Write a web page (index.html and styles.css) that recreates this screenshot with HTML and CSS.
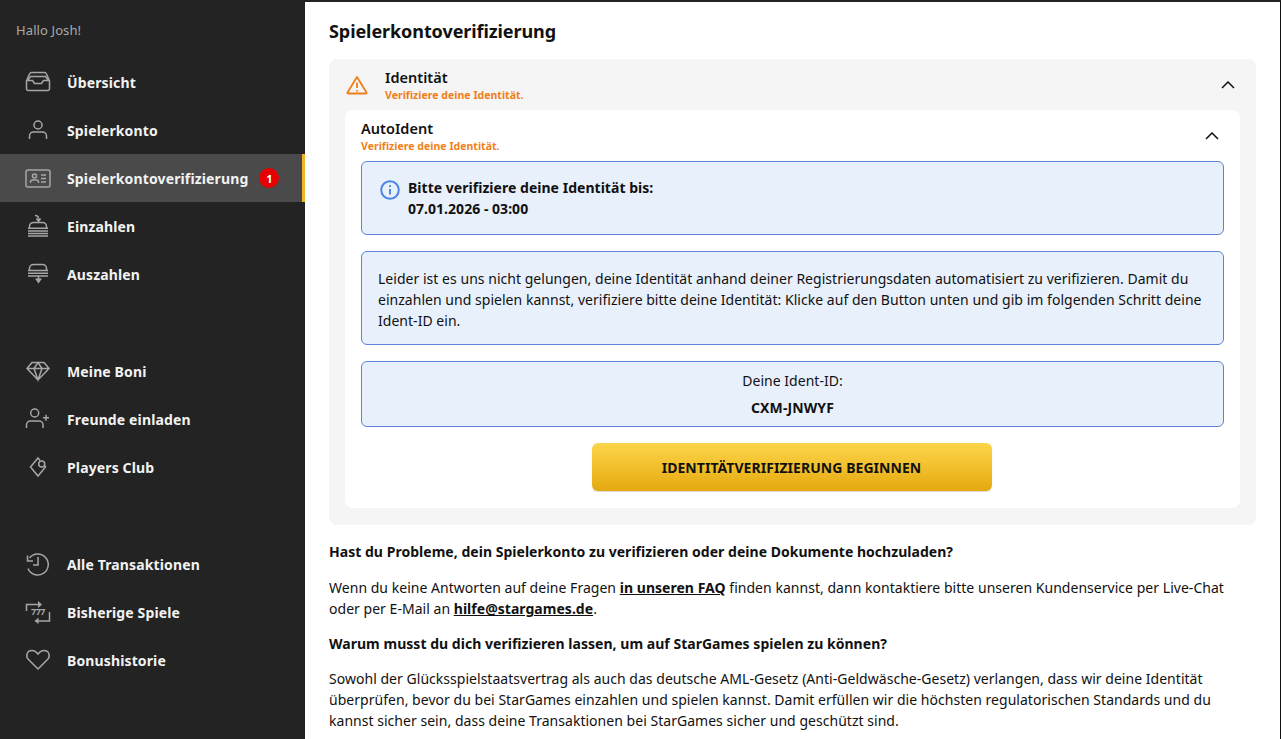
FILE: index.html
```html
<!DOCTYPE html>
<html lang="de">
<head>
  <meta charset="UTF-8" />
  <title>Spielerkontoverifizierung</title>
  <link rel="stylesheet" href="styles.css">
</head>
<body>
  <aside class="sidebar">
    <p class="hello">Hallo Josh!</p>

    <nav class="nav-group">
      <a class="nav-item">
        <svg class="nav-icon" viewBox="0 0 26 24"><path d="M6.500 2.500h13c1 0 1.500.5 2 1.500l3 7v7.500a2 2 0 0 1-2 2h-19a2 2 0 0 1-2-2V11l3-7c.5-1 1-1.500 2-1.500z"/><path d="M5.500 6.500h15l3 4h-5l-2 3h-7l-2-3h-5z"/></svg>
        Übersicht
      </a>
      <a class="nav-item">
        <svg class="nav-icon" viewBox="0 0 26 24"><circle cx="13" cy="7" r="4"/><path d="M4.500 21v-3c0-2.500 2-4 4-4h9c2 0 4 1.500 4 4v3"/></svg>
        Spielerkonto
      </a>
      <a class="nav-item active">
        <svg class="nav-icon" viewBox="0 0 26 24"><rect x="1" y="4" width="24" height="17" rx="2"/><circle cx="9.500" cy="10" r="2"/><path d="M5.500 17v-1c0-1.500 1-2 2-2h4c1 0 2 .5 2 2v1M16 9h5M16 12.500h5M16 16h5"/></svg>
        Spielerkontoverifizierung
        <span class="badge">1</span>
      </a>
      <a class="nav-item">
        <svg class="nav-icon" viewBox="0 0 26 24"><path d="M10 1.500c2.500 0 3.500 1 3.500 3"/><path class="solid" d="M10.500 4.500h6l-3 4z"/><path d="M4.500 14v-1.500c0-2.500 2-4 4-4h9c2 0 4 1.500 4 4V14M3 14.200h20M3 17h20M3 19.500h20M3 22h20"/></svg>
        Einzahlen
      </a>
      <a class="nav-item">
        <svg class="nav-icon" viewBox="0 0 26 24"><path d="M4.500 8V6.500c0-2.500 2-4 4-4h9c2 0 4 1.500 4 4V8M3 8.500h20M3 11.200h20M3 14h20M13.500 14v3"/><path class="solid" d="M10 16.500h7l-3.500 5z"/></svg>
        Auszahlen
      </a>
    </nav>

    <nav class="nav-group">
      <a class="nav-item">
        <svg class="nav-icon" viewBox="0 0 26 24"><path d="M7 3.500h12l5 6L13 21 2 9.500zM2 9.500h22M9 9.500l4-6 4 6M9 9.500L13 21l4-11.500"/></svg>
        Meine Boni
      </a>
      <a class="nav-item">
        <svg class="nav-icon" viewBox="0 0 26 24"><circle cx="9.700" cy="6" r="4"/><path d="M1.500 21v-3c0-2.500 2-4 4-4h8.500c2 0 4 1.500 4 4v3M18 10.700h6M21 7.700v6"/></svg>
        Freunde einladen
      </a>
      <a class="nav-item">
        <svg class="nav-icon" viewBox="0 0 26 24"><path d="M15 5.500L13 3 5.500 12l7.500 9 7.500-9-1-1.500"/><circle cx="16.700" cy="9" r="3"/></svg>
        Players Club
      </a>
    </nav>

    <nav class="nav-group">
      <a class="nav-item">
        <svg class="nav-icon" viewBox="0 0 26 24"><path d="M4.500 6A10.500 10.500 0 1 1 3 16.500M2.500 3.500V9H8M13 5v8H8"/></svg>
        Alle Transaktionen
      </a>
      <a class="nav-item">
        <svg class="nav-icon" viewBox="0 0 26 24"><path d="M1.500 11V4.500h12M24.500 12v9h-13"/><path class="solid" d="M13 1l4 3.500L13 8zM13.500 17.500L9.500 21l4 3z"/><text class="sevens" x="13" y="15">777</text></svg>
        Bisherige Spiele
      </a>
      <a class="nav-item">
        <svg class="nav-icon" viewBox="0 0 26 24"><path d="M13 21L3.500 11.500C.5 8.500 1.500 2.500 7 2.500c2.500 0 4.500 1.500 6 3.500 1.500-2 3.500-3.500 6-3.500 5.500 0 6.500 6 3.500 9z"/></svg>
        Bonushistorie
      </a>
    </nav>
  </aside>

  <main class="content">
    <h1>Spielerkontoverifizierung</h1>

    <section class="outer-card">
      <header class="outer-head">
        <svg class="warn-icon" viewBox="0 0 22 20"><path d="M11 2L1.500 17.500a.6.600 0 0 0 .5 1h18a.6.600 0 0 0 .5-1z"/><path d="M11 7.500v5.500M11 15v1.500"/></svg>
        <div class="head-text">
          <h2>Identität</h2>
          <p class="hint">Verifiziere deine Identität.</p>
        </div>
        <svg class="chevron" viewBox="0 0 14 8"><path d="M1 7l6-6 6 6"/></svg>
      </header>

      <div class="inner-card">
        <header class="inner-head">
          <div class="head-text">
            <h2>AutoIdent</h2>
            <p class="hint">Verifiziere deine Identität.</p>
          </div>
          <svg class="chevron" viewBox="0 0 14 8"><path d="M1 7l6-6 6 6"/></svg>
        </header>

        <div class="notice notice-date">
          <svg class="info-icon" viewBox="0 0 20 20"><circle cx="10" cy="10" r="8.800"/><path d="M10 9v5.500M10 5.200v1.800"/></svg>
          <p><strong>Bitte verifiziere deine Identität bis:<br>07.01.2026 - 03:00</strong></p>
        </div>

        <div class="notice notice-text">
          <p>Leider ist es uns nicht gelungen, deine Identität anhand deiner Registrierungsdaten automatisiert zu verifizieren. Damit du einzahlen und spielen kannst, verifiziere bitte deine Identität: Klicke auf den Button unten und gib im folgenden Schritt deine Ident-ID ein.</p>
        </div>

        <div class="notice notice-id">
          <p>Deine Ident-ID:</p>
          <p class="ident-id">CXM-JNWYF</p>
        </div>

        <button class="start-button">IDENTITÄTVERIFIZIERUNG BEGINNEN</button>
      </div>
    </section>

    <div class="help">
      <p><strong>Hast du Probleme, dein Spielerkonto zu verifizieren oder deine Dokumente hochzuladen?</strong></p>
      <p>Wenn du keine Antworten auf deine Fragen <a href="#">in unseren FAQ</a> finden kannst, dann kontaktiere bitte unseren Kundenservice per Live-Chat oder per E-Mail an <a href="#">hilfe@stargames.de</a>.</p>
      <p><strong>Warum musst du dich verifizieren lassen, um auf StarGames spielen zu können?</strong></p>
      <p>Sowohl der Glücksspielstaatsvertrag als auch das deutsche AML-Gesetz (Anti-Geldwäsche-Gesetz) verlangen, dass wir deine Identität überprüfen, bevor du bei StarGames einzahlen und spielen kannst. Damit erfüllen wir die höchsten regulatorischen Standards und du kannst sicher sein, dass deine Transaktionen bei StarGames sicher und geschützt sind.</p>
    </div>
  </main>
</body>
</html>
```
FILE: styles.css
```css
* {
  box-sizing: border-box;
}
body {
  margin: 0;
  display: flex;
  height: 739px;
  overflow: hidden;
  font-family: "Noto Sans", sans-serif;
  font-size: 14px;
  line-height: 21px;
  letter-spacing: 0.03px;
  color: #111;
  background-color: #fff;
  border-top: 2px solid #232323;
  border-right: 1px solid #111;
}
p {
  margin: 0;
}
.sidebar {
  width: 305px;
  flex-shrink: 0;
  background-color: #232323;
  color: #fff;
}
.hello {
  height: 56px;
  padding: 18px 0 0 16px;
  font-size: 13px;
  letter-spacing: 0.1px;
  color: #aaa;
}
.nav-group {
  display: flex;
  flex-direction: column;
  margin-bottom: 49px;
}
.nav-item {
  display: flex;
  align-items: center;
  height: 48px;
  padding-left: 25px;
  font-size: 14px;
  font-weight: 700;
  letter-spacing: 0.13px;
  color: #f2f2f2;
}
.nav-item.active {
  background-color: #4a4a4a;
  border-right: 3px solid #f0b429;
}
.nav-icon {
  width: 26px;
  height: 24px;
  margin-right: 16px;
  overflow: visible;
  fill: none;
  stroke: #a6a6a6;
  stroke-width: 1.5;
}
.nav-icon .solid {
  fill: #a6a6a6;
  stroke: none;
}
.nav-icon .sevens {
  fill: #a6a6a6;
  stroke: none;
  font-size: 9px;
  font-weight: 700;
  letter-spacing: -0.5px;
  text-anchor: middle;
}
.badge {
  display: flex;
  align-items: center;
  justify-content: center;
  width: 20px;
  height: 20px;
  margin-left: 11px;
  border-radius: 50%;
  background-color: #e60000;
  font-size: 11px;
  color: #fff;
}
.content {
  flex: 1;
  padding: 0 24px;
}
h1 {
  margin: 16px 0 15px;
  font-size: 18px;
  line-height: 26px;
  letter-spacing: -0.08px;
  font-weight: 700;
}
h2 {
  margin: 0 0 2px;
  font-size: 14.5px;
  line-height: 17px;
  font-weight: 600;
}
.outer-card {
  padding: 0 16px 17px;
  border-radius: 8px;
  background-color: #f5f5f5;
}
.outer-head {
  display: flex;
  align-items: center;
  height: 51px;
}
.warn-icon {
  width: 22px;
  height: 20px;
  margin: 0 17px 0 1px;
  fill: none;
  stroke: #ef7f1a;
  stroke-width: 1.8;
  stroke-linejoin: round;
}
.head-text {
  flex: 1;
  padding-top: 1px;
}
.hint {
  font-size: 10.5px;
  line-height: 14px;
  font-weight: 700;
  color: #ef7f1a;
}
.chevron {
  width: 14px;
  height: 8px;
  margin-right: 5px;
  fill: none;
  stroke: #111;
  stroke-width: 1.5;
}
.inner-card {
  display: flex;
  flex-direction: column;
  padding: 0 16px 17px;
  border-radius: 8px;
  background-color: #fff;
}
.inner-head {
  display: flex;
  align-items: center;
  height: 51px;
}
.notice {
  margin-bottom: 16px;
  border: 1px solid #5b84d8;
  border-radius: 6px;
  background-color: #e8f0fb;
}
.notice-date {
  display: flex;
  align-items: flex-start;
  height: 74px;
  padding: 16px 18px;
  line-height: 20.5px;
}
.info-icon {
  width: 20px;
  height: 20px;
  margin: 2px 8px 0 0;
  fill: none;
  stroke: #4b85e8;
  stroke-width: 2;
}
.notice-text {
  height: 94px;
  padding: 16px;
}
.notice-id {
  height: 66px;
  padding: 8px;
  text-align: center;
}
.ident-id {
  margin-top: 6px;
  font-weight: 700;
  letter-spacing: 0.1px;
}
.start-button {
  align-self: center;
  width: 400px;
  height: 48px;
  margin-right: 2px;
  border: none;
  border-radius: 6px;
  background: linear-gradient(#fdd549, #e5a90f);
  font-family: inherit;
  font-size: 14px;
  font-weight: 700;
  letter-spacing: 0.05px;
  color: #111;
  box-shadow: 0 1px 1px rgba(0, 0, 0, 0.15);
}
.help {
  display: flex;
  flex-direction: column;
  gap: 14px;
  margin-top: 16px;
  padding-right: 12px;
}
.help p:first-child {
  margin-bottom: 1px;
}
.help a {
  color: #111;
  font-weight: 700;
  text-decoration: underline;
}
```
